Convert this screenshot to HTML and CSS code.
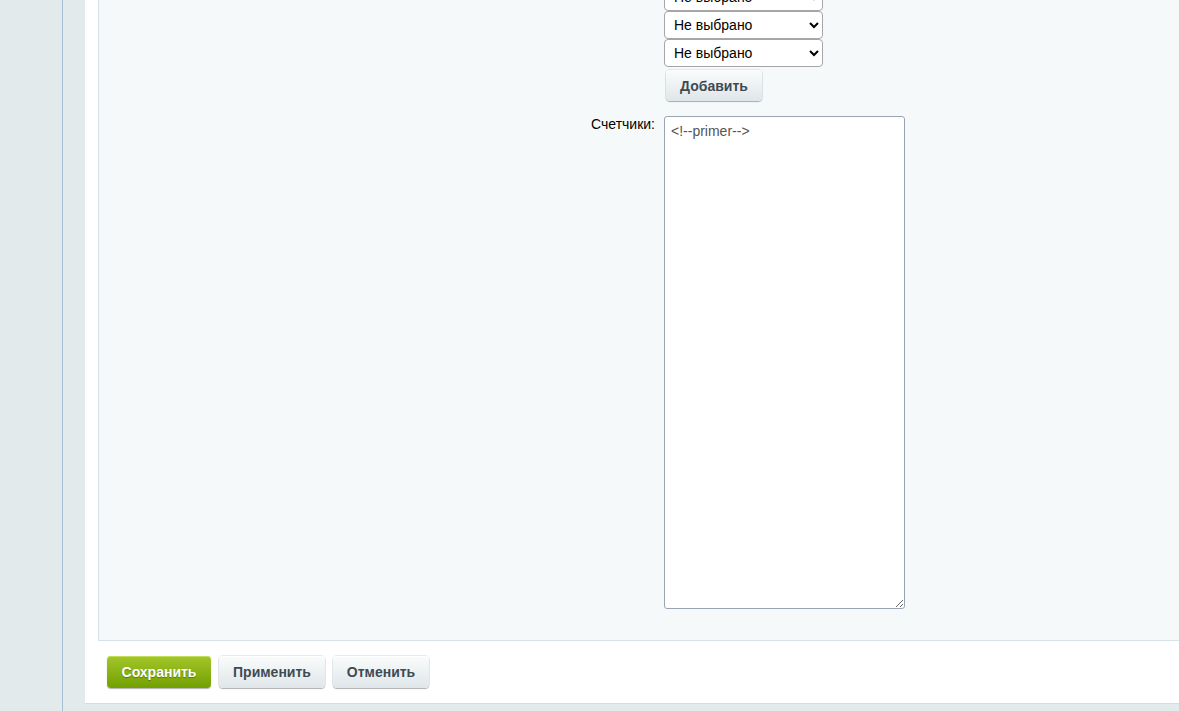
FILE: index.html
```html
<!DOCTYPE html>
<html lang="ru">
<head>
<meta charset="utf-8">
<title>Настройки</title>
<link rel="stylesheet" href="styles.css">
</head>
<body>
<div class="page">
  <aside class="sidebar"></aside>
  <main class="panel">
    <div class="edit-area">
      <div class="form-grid">
        <div class="label-cell"></div>
        <div class="field-cell selects">
          <select class="sel"><option>Не выбрано</option></select>
          <select class="sel"><option>Не выбрано</option></select>
          <select class="sel"><option>Не выбрано</option></select>
          <button class="btn btn-add" type="button">Добавить</button>
        </div>
        <div class="label-cell counters-label">Счетчики:</div>
        <div class="field-cell">
          <textarea class="counters">&lt;!--primer--&gt;</textarea>
        </div>
      </div>
    </div>
    <div class="button-bar">
      <button class="btn btn-save" type="button">Сохранить</button>
      <button class="btn btn-apply" type="button">Применить</button>
      <button class="btn btn-cancel" type="button">Отменить</button>
    </div>
  </main>
</div>
</body>
</html>
```

FILE: styles.css
```css
html, body {
  margin: 0;
  padding: 0;
  height: 100%;
  overflow: hidden;
}
body {
  background: #e2eaeb;
  font-family: "Liberation Sans", Arial, sans-serif;
  font-size: 14px;
  color: #000;
}
.page {
  display: flex;
  align-items: flex-start;
  height: 711px;
}
.sidebar {
  width: 62px;
  flex: none;
  align-self: stretch;
  border-right: 1px solid #a7bdd4;
}
.panel {
  margin-left: 22px;
  flex: 1;
  background: #fff;
  border-bottom: 1px solid #d3dde0;
  height: 704px;
  box-sizing: border-box;
  padding-left: 13px;
  display: flex;
  flex-direction: column;
}
.edit-area {
  background: #f5f9f9;
  border-left: 1px solid #d6e3e8;
  border-bottom: 1px solid #d6e3e8;
  height: 641px;
  box-sizing: border-box;
  overflow: hidden;
}
.form-grid {
  display: grid;
  grid-template-columns: 565px 1fr;
  margin-top: -17px;
}
.label-cell {
  text-align: right;
  padding-right: 9px;
  color: #000;
}
.counters-label {
  padding-top: 15px;
}
.selects {
  display: flex;
  flex-direction: column;
  align-items: flex-start;
}
.sel {
  width: 159px;
  height: 28px;
  margin: 0;
  font-family: "Liberation Sans", Arial, sans-serif;
  font-size: 14px;
  color: #000;
  background: #fff;
  border: 1px solid #a6a6a6;
  border-radius: 4px;
  padding: 0 5px;
}
.btn {
  font-family: "Liberation Sans", Arial, sans-serif;
  font-size: 14px;
  font-weight: bold;
  color: #3f4b54;
  height: 32px;
  padding: 0;
  border: none;
  border-radius: 4px;
  background: linear-gradient(to bottom, #fafcfc, #dfe6e9);
  box-shadow: 0 1px 1px rgba(0,0,0,0.25), inset 0 1px 0 #fff, 0 0 0 1px rgba(180,190,195,0.3);
  cursor: pointer;
}
.btn-add {
  margin: 3px 0 0 2px;
  width: 96px;
  height: 31px;
}
.counters {
  display: block;
  margin-top: 15px;
  width: 241px;
  height: 493px;
  box-sizing: border-box;
  border: 1px solid #9ba4b3;
  border-radius: 3px;
  background: #fff;
  font-family: "Liberation Sans", Arial, sans-serif;
  font-size: 14px;
  color: #555;
  padding: 6px 6px;
  resize: both;
}
.button-bar {
  display: flex;
  gap: 8px;
  padding: 15px 0 0 9px;
}
.btn-save { width: 104px; }
.btn-apply { width: 106px; }
.btn-cancel { width: 96px; }
.btn-save {
  color: #fff;
  background: linear-gradient(to bottom, #a4c62a, #72a000);
  text-shadow: 0 1px 1px rgba(0,0,0,0.3);
  box-shadow: 0 1px 1px rgba(0,0,0,0.3), inset 0 1px 0 #c3dd5c;
}
```
